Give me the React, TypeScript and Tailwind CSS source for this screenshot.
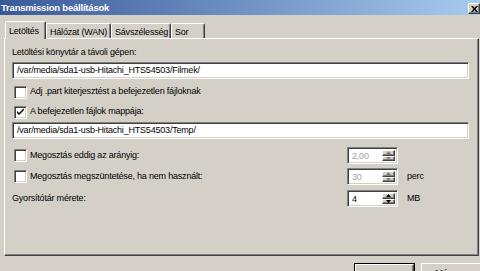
import React from 'react';

const sunken =
  'border border-t-[#808080] border-l-[#808080] border-b-white border-r-white shadow-[inset_1px_1px_0_#404040,inset_-1px_-1px_0_#d4d0c8]';
const raised =
  'border border-t-white border-l-white border-b-[#404040] border-r-[#404040] shadow-[inset_-1px_-1px_0_#808080]';

const Arrow = ({ up, dim }: { up?: boolean; dim?: boolean }) => (
  <svg width="5" height="3" viewBox="0 0 5 3">
    <path d={up ? 'M0 3 L2.5 0 L5 3 Z' : 'M0 0 L2.5 3 L5 0 Z'} fill={dim ? '#808080' : '#000'} />
  </svg>
);

const CheckBox = ({ checked }: { checked?: boolean }) => (
  <div className={`w-[13px] h-[13px] shrink-0 bg-white flex items-center justify-center ${sunken}`}>
    {checked && (
      <svg width="7" height="7" viewBox="0 0 7 7">
        <path d="M0 2 L0 4 L2 6 L7 1 L7 -1 L2 4 Z" fill="#000" />
      </svg>
    )}
  </div>
);

const Spin = ({ value, disabled }: { value: string; disabled?: boolean }) => (
  <div className={`w-[51px] h-[17px] shrink-0 bg-white flex items-stretch p-[2px] ${sunken}`}>
    <div className={`flex-1 pl-[2px] leading-[12px] ${disabled ? 'text-[#a0a0a0]' : 'text-black'}`}>{value}</div>
    <div className="w-[13px] flex flex-col">
      <div className={`flex-1 bg-[#d4d0c8] flex items-center justify-center ${raised}`}>
        <Arrow up dim={disabled} />
      </div>
      <div className={`flex-1 bg-[#d4d0c8] flex items-center justify-center ${raised}`}>
        <Arrow dim={disabled} />
      </div>
    </div>
  </div>
);

const Tab = ({ label, width, active }: { label: string; width: string; active?: boolean }) => (
  <div
    className={`${width} pl-[3px] flex items-center whitespace-nowrap bg-[#d4d0c8] border-t border-l border-r border-t-white border-l-white border-r-[#404040] shadow-[inset_-1px_0_0_#808080] rounded-t-[2px] ${
      active ? 'h-[18px] -mb-px relative z-10' : 'h-[15px]'
    }`}
  >
    <span className="leading-[12px] pt-[1px]">{label}</span>
  </div>
);

export default function App() {
  return (
    <div className="w-[480px] h-[271px] overflow-hidden bg-[#d4d0c8] text-[9px] tracking-[-0.2px] text-black font-['Liberation_Sans',Arial,sans-serif]">
      <div className="h-[15px] bg-gradient-to-r from-[#3a5a97] to-[#a8cbef] flex items-center justify-between">
        <span className="pl-[1px] text-white font-bold text-[9.5px] tracking-[-0.2px] leading-[13px]">Transmission beállítások</span>
        <div className={`w-[12px] h-[11px] mt-[2px] bg-[#d4d0c8] flex items-center justify-center ${raised}`}>
          <svg width="7" height="6" viewBox="0 0 7 6">
            <path d="M0 0 L2 0 L3.5 2 L5 0 L7 0 L4.5 3 L7 6 L5 6 L3.5 4 L2 6 L0 6 L2.5 3 Z" fill="#000" />
          </svg>
        </div>
      </div>

      <div className="pl-[4px] pr-[1px]">
        <div className="h-[23px] flex items-end pl-[1px]">
          <Tab label="Letöltés" width="w-[41px]" active />
          <Tab label="Hálózat (WAN)" width="w-[65px]" />
          <Tab label="Sávszélesség" width="w-[60px]" />
          <Tab label="Sor" width="w-[34px]" />
        </div>

        <div className="h-[218px] border border-t-white border-l-white border-r-[#404040] border-b-[#404040] shadow-[inset_-1px_-1px_0_#808080] pl-[7px] pr-[9px] pt-[6px]">
          <div className="leading-[14px]">Letöltési könyvtár a távoli gépen:</div>
          <div className={`mt-[3px] h-[17px] bg-white px-[4px] leading-[15px] ${sunken}`}>
            /var/media/sda1-usb-Hitachi_HTS54503/Filmek/
          </div>

          <div className="mt-[6px] h-[14px] flex items-center gap-[3px] pl-[2px]">
            <CheckBox />
            <span>Adj .part kiterjesztést a befejezetlen fájloknak</span>
          </div>
          <div className="mt-[6px] h-[14px] flex items-center gap-[3px] pl-[2px]">
            <CheckBox checked />
            <span>A befejezetlen fájlok mappája:</span>
          </div>
          <div className={`mt-[3px] h-[17px] bg-white px-[4px] leading-[15px] ${sunken}`}>
            /var/media/sda1-usb-Hitachi_HTS54503/Temp/
          </div>

          <div className="mt-[8px] h-[17px] flex items-center">
            <div className="w-[335px] flex items-center gap-[3px] pl-[2px]">
              <CheckBox />
              <span>Megosztás eddig az arányig:</span>
            </div>
            <Spin value="2,00" disabled />
          </div>
          <div className="mt-[4px] h-[17px] flex items-center">
            <div className="w-[335px] flex items-center gap-[3px] pl-[2px]">
              <CheckBox />
              <span>Megosztás megszüntetése, ha nem használt:</span>
            </div>
            <Spin value="30" disabled />
            <span className="ml-[9px]">perc</span>
          </div>
          <div className="mt-[5px] h-[17px] flex items-center">
            <div className="w-[335px]">Gyorsítótár mérete:</div>
            <Spin value="4" />
            <span className="ml-[9px]">MB</span>
          </div>
        </div>

        <div className="mt-[7px] flex justify-end gap-[6px]">
          <div className="w-[61px] h-[23px] border border-black">
            <div className={`h-full flex items-start pt-[3px] justify-center ${raised}`}>OK</div>
          </div>
          <div className={`w-[62px] h-[23px] flex items-start pt-[3px] justify-center -mr-[4px] ${raised}`}>Mégsem</div>
        </div>
      </div>
    </div>
  );
}
